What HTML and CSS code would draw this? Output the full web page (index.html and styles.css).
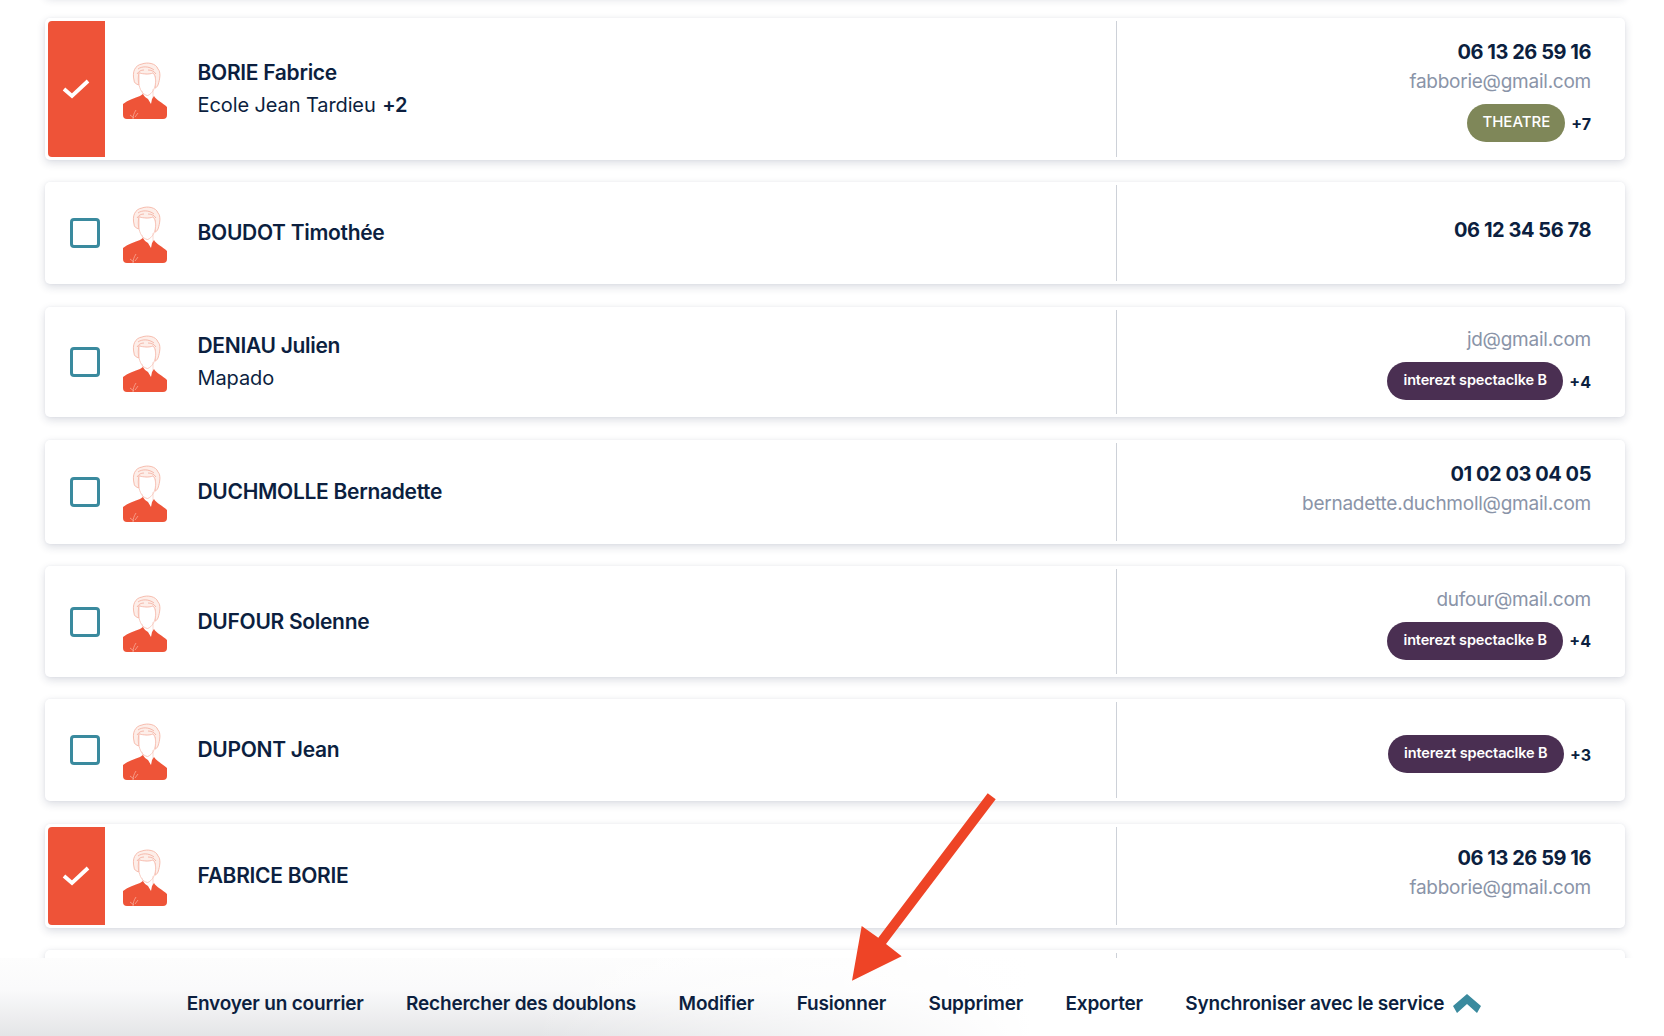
FILE: index.html
```html
<!DOCTYPE html>
<html lang="fr">
<head>
<meta charset="utf-8">
<title>Contacts</title>
<link rel="stylesheet" href="styles.css">
</head>
<body>
<svg width="0" height="0" class="defs">
  <defs>
    <symbol id="avatar" viewBox="0 0 44 57">
      <path d="M11 18C9 10 12 3 19 2C24 0 33 1 35 7C38 10 37 17 35 23C34 25 33 26 32 26C33 18 33 14 30 11C25 13 21 12 16 11C15 15 15 19 16 23C13 22 11 21 11 18Z" fill="#fdeee9" stroke="#f5b5a6" stroke-width=".9"/>
      <path d="M15 7C19 4 26 4 31 8M14 12C16 9 18 8 21 8M25 8C28 8 31 9 33 12" fill="none" stroke="#f3ab9b" stroke-width=".8"/>
      <path d="M16 11C21 12 25 13 30 11C33 14 33 20 32 24C31 29 27 33 24.500 33.500C20 33 16 27 16 21Z" fill="#fff" stroke="#f6bfb2" stroke-width=".8"/>
      <path d="M19 29L20 35M30 27L30 36" fill="none" stroke="#f9d2c9" stroke-width=".8"/>
      <path d="M0 42C5 38 12 36 17 34L20 32C21 34 23 36 25 37L28 42L29 37L31 34C33 38 40 41 44 45V53Q44 57 40 57H4Q0 57 0 53Z" fill="#ee5438"/>
      <path d="M10 57C10 54 11 51 13 48M7 53L11 56M15 51L12 55" fill="none" stroke="#f7a998" stroke-width=".8"/>
    </symbol>
    <symbol id="check" viewBox="0 0 28 20">
      <path d="M2 10l8 7L26 2" fill="none" stroke="#fff" stroke-width="3.8"/>
    </symbol>
  </defs>
</svg>

<main class="list">
  <article class="card stub"></article>

  <article class="card">
    <div class="select is-checked"><svg class="tick"><use href="#check"/></svg></div>
    <svg class="avatar"><use href="#avatar"/></svg>
    <div class="who">
      <div class="name">BORIE Fabrice</div>
      <div class="org">Ecole Jean Tardieu <b class="more">+2</b></div>
    </div>
    <div class="info">
      <div class="phone">06 13 26 59 16</div>
      <div class="mail">fabborie@gmail.com</div>
      <div class="tags"><span class="tag olive">THEATRE</span><b class="count">+7</b></div>
    </div>
  </article>

  <article class="card">
    <div class="select"><span class="box"></span></div>
    <svg class="avatar"><use href="#avatar"/></svg>
    <div class="who"><div class="name">BOUDOT Timothée</div></div>
    <div class="info"><div class="phone">06 12 34 56 78</div></div>
  </article>

  <article class="card spaced">
    <div class="select"><span class="box"></span></div>
    <svg class="avatar"><use href="#avatar"/></svg>
    <div class="who">
      <div class="name">DENIAU Julien</div>
      <div class="org">Mapado</div>
    </div>
    <div class="info">
      <div class="mail">jd@gmail.com</div>
      <div class="tags"><span class="tag plum">interezt spectaclke B</span><b class="count">+4</b></div>
    </div>
  </article>

  <article class="card spaced">
    <div class="select"><span class="box"></span></div>
    <svg class="avatar"><use href="#avatar"/></svg>
    <div class="who"><div class="name">DUCHMOLLE Bernadette</div></div>
    <div class="info">
      <div class="phone">01 02 03 04 05</div>
      <div class="mail">bernadette.duchmoll@gmail.com</div>
    </div>
  </article>

  <article class="card">
    <div class="select"><span class="box"></span></div>
    <svg class="avatar"><use href="#avatar"/></svg>
    <div class="who"><div class="name">DUFOUR Solenne</div></div>
    <div class="info">
      <div class="mail">dufour@mail.com</div>
      <div class="tags"><span class="tag plum">interezt spectaclke B</span><b class="count">+4</b></div>
    </div>
  </article>

  <article class="card">
    <div class="select"><span class="box"></span></div>
    <svg class="avatar"><use href="#avatar"/></svg>
    <div class="who"><div class="name">DUPONT Jean</div></div>
    <div class="info">
      <div class="tags"><span class="tag plum">interezt spectaclke B</span><b class="count">+3</b></div>
    </div>
  </article>

  <article class="card spaced">
    <div class="select is-checked"><svg class="tick"><use href="#check"/></svg></div>
    <svg class="avatar"><use href="#avatar"/></svg>
    <div class="who"><div class="name">FABRICE BORIE</div></div>
    <div class="info">
      <div class="phone">06 13 26 59 16</div>
      <div class="mail">fabborie@gmail.com</div>
    </div>
  </article>

  <article class="card stub"><div class="select"></div><div class="who"></div><div class="info"></div></article>
</main>

<nav class="actions">
  <a class="action">Envoyer un courrier</a>
  <a class="action">Rechercher des doublons</a>
  <a class="action">Modifier</a>
  <a class="action">Fusionner</a>
  <a class="action">Supprimer</a>
  <a class="action">Exporter</a>
  <a class="action sync">Synchroniser avec le service
    <svg class="chevron" viewBox="0 0 28 19"><path d="M14 0l14 12-4 7-10-9-10 9-4-7z" fill="#3a8a9e"/></svg>
  </a>
</nav>

<svg class="arrow" viewBox="0 0 1664 1036"><path d="M987.700 793.300L995.700 799.300L886 944L901.700 956.300L852 980.700L861.700 926L878.300 937.700Z" fill="#ee4426"/></svg>
</body>
</html>
```
FILE: styles.css
```css
* { box-sizing: border-box; }
html, body { margin: 0; height: 100%; }
body {
  position: relative;
  width: 1664px;
  height: 1036px;
  overflow: hidden;
  background: #fff;
  color: #0c1f3f;
  font-family: "Inter", "Liberation Sans", sans-serif;
}
.defs { position: absolute; }
.list {
  display: grid;
  grid-template-rows: 102px 142px 102px 111px 105px 111px 102px 105px 102px;
  row-gap: 22px;
  margin-top: -106px;
  padding: 0 39px 0 45px;
}
.card {
  display: flex;
  align-items: stretch;
  padding: 3px;
  background: #fff;
  border-radius: 5px;
  box-shadow: 0 3px 9px rgba(30, 45, 80, .16), 0 0 3px rgba(30, 45, 80, .05);
}
.spaced { margin-top: 1px; }
.select {
  flex: 0 0 57px;
  display: flex;
  align-items: center;
  padding-left: 22px;
}
.is-checked {
  padding-left: 14px;
  background: #ee5338;
  border-radius: 4px 0 0 4px;
}
.tick { width: 28px; height: 20px; }
.box {
  width: 30px;
  height: 30px;
  border: 3px solid #3a8a9e;
  border-radius: 4px;
}
.avatar {
  flex: none;
  align-self: center;
  width: 44px;
  height: 57px;
  margin: 3px 0 0 18px;
  filter: blur(.25px);
}
.who {
  flex: 1;
  display: flex;
  flex-direction: column;
  justify-content: center;
  gap: 8px;
  padding-left: 30.500px;
  border-right: 1px solid #cdd1d8;
}
.name { font-size: 21px; font-weight: 600; line-height: 24px; letter-spacing: -.3px; }
.org { font-size: 20px; line-height: 24px; letter-spacing: -.1px; }
.more { margin-left: 1px; font-weight: 600; }
.info {
  flex: 0 0 505px;
  display: flex;
  flex-direction: column;
  justify-content: center;
  align-items: flex-end;
  padding-right: 31px;
}
.phone { margin-bottom: 6px; font-size: 20px; font-weight: 700; line-height: 24px; letter-spacing: -.45px; }
.mail { margin-bottom: 6px; font-size: 19px; line-height: 24px; color: #8a94a8; letter-spacing: -.25px; }
.tags { display: flex; align-items: center; gap: 6px; margin-top: 8px; }
.mail + .tags { margin: 4px 0 -4px; }
.tag {
  display: block;
  height: 38px;
  padding: 0 15px;
  border-radius: 19px;
  color: #fff;
  font-size: 15px;
  font-weight: 500;
  line-height: 36px;
}
.olive { background: #7f8759; }
.plum { padding: 0 16.500px; background: #4a2f52; font-size: 14.500px; font-weight: 600; letter-spacing: -.15px; }
.count { padding-top: 1px; font-size: 16px; font-weight: 700; }
.actions {
  position: absolute;
  left: 0;
  right: 0;
  bottom: 0;
  height: 78px;
  display: flex;
  justify-content: center;
  align-items: center;
  gap: 42.500px;
  padding: 12px 0 0 4px;
  background:
    linear-gradient(to right, rgba(255, 255, 255, 0) 32%, #fff 62%),
    linear-gradient(to bottom, #fdfdfd, #fafafb 40%, #e4e5e7);
}
.action { font-size: 19px; font-weight: 600; letter-spacing: -.2px; white-space: nowrap; }
.sync { display: flex; align-items: center; gap: 9px; }
.chevron { width: 28px; height: 19px; }
.arrow {
  position: absolute;
  left: 0;
  top: 0;
  width: 1664px;
  height: 1036px;
  pointer-events: none;
}
```
